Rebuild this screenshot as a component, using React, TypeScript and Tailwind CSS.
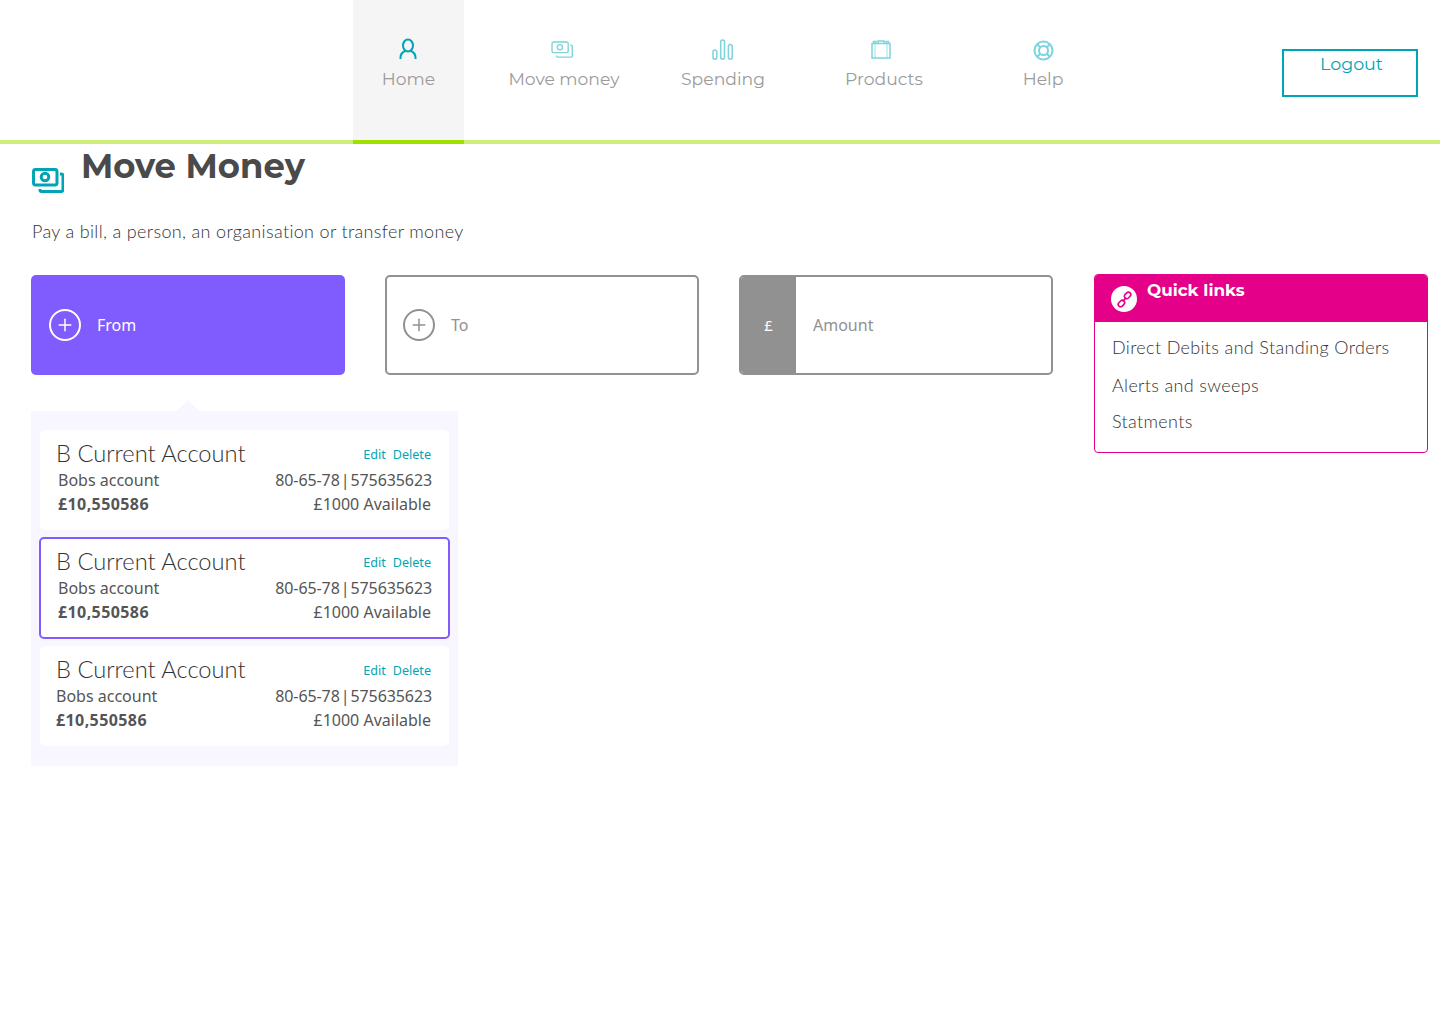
import { Plus } from "lucide-react";

const navFont = "font-['Montserrat','Inter',sans-serif]";

const PersonIcon = () => (
  <svg width="18" height="21" viewBox="0 0 18 21" fill="none" stroke="#00a5b5" strokeWidth="2">
    <ellipse cx="9" cy="7.500" rx="5" ry="6" />
    <path d="M1.500 21v-1.500c0-3.500 2.500-5.500 4.500-6.500M16.500 21v-1.500c0-3.500-2.500-5.500-4.500-6.500" />
  </svg>
);

const MoneyIcon = ({ size = 22, width = 2, color = "#7fd3da" }: { size?: number; width?: number; color?: string }) => (
  <svg width={size} height={size * 0.78} viewBox="0 0 32 25" fill="none" stroke={color} strokeWidth={width}>
    <rect x="1.500" y="1.500" width="23.500" height="15.500" rx="2" />
    <circle cx="13" cy="9" r="3.800" />
    <path d="M28 6h1.500a1.500 1.500 0 0 1 1.500 1.500V22a1.500 1.500 0 0 1-1.500 1.500H9.500A1.500 1.500 0 0 1 8 22V21" />
  </svg>
);

const BarsIcon = () => (
  <svg width="22" height="21" viewBox="0 0 22 21" fill="none" stroke="#7fd3da" strokeWidth="1.500">
    <rect x="1" y="11" width="3.800" height="9.200" rx="1.900" />
    <rect x="8.700" y="1" width="3.800" height="19.200" rx="1.900" />
    <rect x="16.400" y="5.500" width="3.800" height="14.700" rx="1.900" />
  </svg>
);

const ProductsIcon = () => (
  <svg width="20" height="19" viewBox="0 0 20 19" fill="none" stroke="#7fd3da" strokeWidth="1.500">
    <rect x="1" y="3.500" width="18" height="14.500" />
    <path d="M4 3.500V18M16 3.500V18" strokeOpacity="0.5" />
    <path d="M2.500 3.500V1.500h2.500v2M15 3.500v-2h2.500v2M7 3V1h6v2" />
  </svg>
);

const HelpIcon = () => (
  <svg width="21" height="21" viewBox="0 0 21 21" fill="none" stroke="#7fd3da" strokeWidth="2">
    <circle cx="10.500" cy="10.500" r="9" />
    <circle cx="10.500" cy="10.500" r="4.500" />
    <path d="M4.200 4.200l3 3M16.800 4.200l-3 3M4.200 16.800l3-3M16.800 16.800l-3-3" />
  </svg>
);

const LinkIcon = () => (
  <svg width="17" height="17" viewBox="0 0 18 18" fill="none" stroke="#e5008a" strokeWidth="1.700">
    <rect x="8.500" y="2.200" width="7.500" height="5" rx="2.500" transform="rotate(-45 12.250 4.700)" />
    <rect x="2" y="10.800" width="7.500" height="5" rx="2.500" transform="rotate(-45 5.750 13.300)" />
    <path d="M7 11l4-4" />
  </svg>
);

const navItems = [
  { label: "Home", icon: <PersonIcon />, w: "w-[111px]", shift: "-ml-px pb-[4px]", active: true },
  { label: "Move money", icon: <MoneyIcon />, w: "w-[200px]", shift: "-ml-[4px]", active: false },
  { label: "Spending", icon: <BarsIcon />, w: "w-[118px]", shift: "pb-[2px]", active: false },
  { label: "Products", icon: <ProductsIcon />, w: "w-[204px]", shift: "-ml-[6px] pb-[2px]", active: false },
  { label: "Help", icon: <HelpIcon />, w: "w-[114px]", shift: "", active: false },
];

const accounts = [
  { nameClass: "pl-[2px]", selected: false },
  { nameClass: "pl-[2px]", selected: true },
  { nameClass: "", selected: false },
];

const App = () => {
  return (
    <div className="min-h-[1024px] bg-white font-['Noto_Sans',sans-serif] text-[#4a4a4a]">
      {/* Header */}
      <header className="flex h-[144px] border-b-4 border-[#cdee7c] pl-[353px]">
        {navItems.map((item) => (
          <div
            key={item.label}
            className={`${item.w} -mb-1 flex h-[144px] flex-col items-center border-b-4 pt-[38px] ${
              item.active ? "border-[#a0e000] bg-[#f5f5f5]" : "border-transparent"
            }`}
          >
            <div className={`flex h-[24px] items-center ${item.shift}`}>{item.icon}</div>
            <span className={`mt-[5px] text-[17.200px] leading-[24px] text-[#9b9b9b] ${navFont}`}>{item.label}</span>
          </div>
        ))}
        <div className="ml-[182px] pt-[49px]">
          <button className={`h-[48px] w-[136px] border-2 border-[#00a5b5] pb-[18px] pl-[3px] text-[17.500px] leading-[26px] text-[#00a5b5] ${navFont}`}>
            Logout
          </button>
        </div>
      </header>

      <main className="flex pl-[31px]">
        <div className="w-[1022px]">
          {/* Title */}
          <div className="flex h-[50px] items-start pl-[1px]">
            <div className="mt-[24px]">
              <MoneyIcon size={32} width={3} color="#00a5b5" />
            </div>
            <h1 className={`ml-[17px] text-[33.800px] leading-[44px] font-bold ${navFont}`}>Move Money</h1>
          </div>
          <p className="mt-[25px] pl-[1px] font-['Lato',sans-serif] text-[18px] leading-[24px] font-light tracking-[0.34px] text-[#333333]">
            Pay a bill, a person, an organisation or transfer money
          </p>

          {/* Form row */}
          <div className="mt-[32px] flex gap-[40px]">
            <div className="flex h-[100px] w-[314px] items-center rounded-[5px] bg-[#805cff] pl-[18px] text-white">
              <span className="flex h-[32px] w-[32px] items-center justify-center rounded-full border-2 border-white">
                <Plus size={20} strokeWidth={1.800} />
              </span>
              <span className="ml-[16px] text-[16px]">From</span>
            </div>
            <div className="flex h-[100px] w-[314px] items-center rounded-[5px] border-2 border-[#919191] pl-[16px] text-[#919191]">
              <span className="flex h-[32px] w-[32px] items-center justify-center rounded-full border-2 border-[#919191]">
                <Plus size={20} strokeWidth={1.800} />
              </span>
              <span className="ml-[16px] text-[16px]">To</span>
            </div>
            <div className="flex h-[100px] w-[314px] overflow-hidden rounded-[5px] border-2 border-[#919191] text-[#919191]">
              <span className="flex w-[55px] items-center justify-center bg-[#919191] text-[15px] text-white">£</span>
              <span className="ml-[17px] self-center text-[16px]">Amount</span>
            </div>
          </div>

          {/* Account picker */}
          <div className="relative mt-[36px] w-[427px] bg-[#f8f6ff] px-[9px] pt-[19px] pb-[20px]">
            <div className="absolute -top-[11px] left-[146px] h-0 w-0 border-x-[11px] border-b-[11px] border-x-transparent border-b-[#f8f6ff]" />
            <div className="flex flex-col gap-[8px]">
              {accounts.map((account, i) => (
                <div
                  key={i}
                  className={`rounded-[5px] bg-white text-[#555555] ${
                    account.selected
                      ? "-m-px h-[102px] border-2 border-[#805cff] pt-[9px] pr-[16px] pl-[15px]"
                      : "h-[100px] pt-[10px] pr-[17px] pl-[16px]"
                  }`}
                >
                  <div className="flex items-start justify-between">
                    <span className="font-['Lato',sans-serif] text-[23.700px] leading-[26px] font-light text-[#333333]">B Current Account</span>
                    <span className="mt-[2px] pr-px text-[12.600px] leading-[26px] text-[#00a5b5]">
                      Edit<span className="ml-[7px]">Delete</span>
                    </span>
                  </div>
                  <div className="flex justify-between text-[16px] leading-[24px]">
                    <div className={account.nameClass}>
                      <div>Bobs account</div>
                      <div className="font-bold tracking-[0.4px]">£10,550586</div>
                    </div>
                    <div className="pr-px text-right">
                      <div className="-mr-px tracking-[-0.1px] [word-spacing:-3px]">80-65-78 | 575635623</div>
                      <div>£1000 Available</div>
                    </div>
                  </div>
                </div>
              ))}
            </div>
          </div>
        </div>

        {/* Quick links */}
        <aside className="mt-[130px] ml-[41px] h-[179px] w-[334px] overflow-hidden rounded-[4px] border border-[#e5008a]">
          <div className="flex h-[47px] items-start bg-[#e5008a] pl-[16px] text-white">
            <span className="mt-[11px] flex h-[26px] w-[26px] items-center justify-center rounded-full bg-white">
              <LinkIcon />
            </span>
            <span className={`mt-[2px] ml-[10px] text-[16.800px] leading-[26px] font-bold ${navFont}`}>Quick links</span>
          </div>
          <ul className="pt-[13px] pl-[17px] font-['Lato',sans-serif] text-[18px] leading-[24px] font-light tracking-[0.34px] text-[#333333]">
            <li>Direct Debits and Standing Orders</li>
            <li className="mt-[14px]">Alerts and sweeps</li>
            <li className="mt-[12px]">Statments</li>
          </ul>
        </aside>
      </main>
    </div>
  );
};

export default App;
